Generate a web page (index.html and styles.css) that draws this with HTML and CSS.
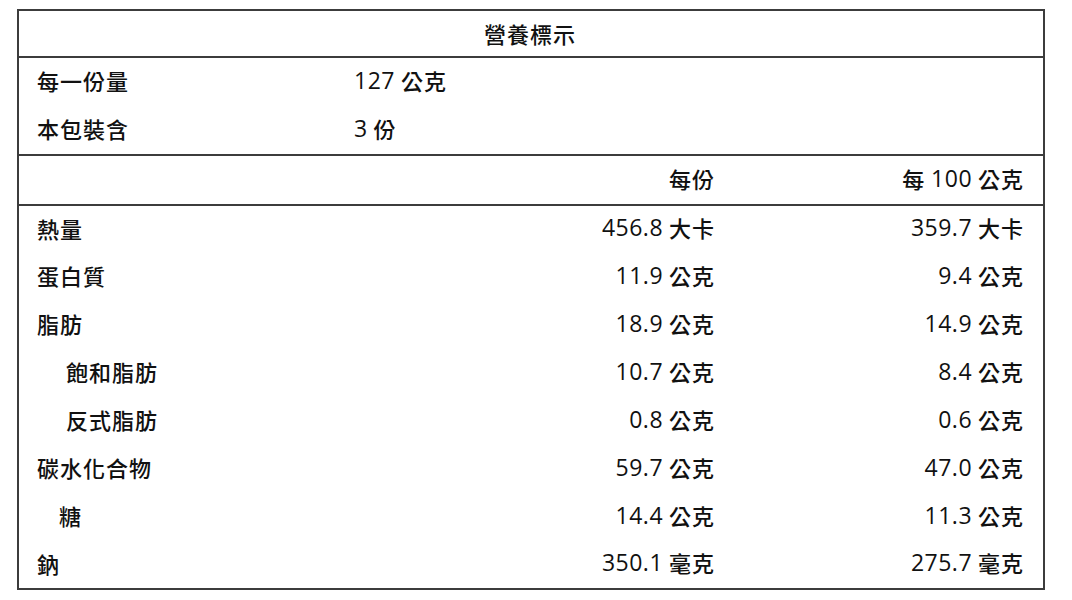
FILE: index.html
```html
<!DOCTYPE html>
<html lang="zh-Hant">
<head>
<meta charset="utf-8">
<title>營養標示</title>
<link rel="stylesheet" href="styles.css">
</head>
<body>
<div class="page">
<table class="nutrition">
  <colgroup>
    <col class="c-label">
    <col class="c-serv">
    <col class="c-100">
  </colgroup>
  <thead>
    <tr class="title-row"><th colspan="3">營養標示</th></tr>
  </thead>
  <tbody class="info">
    <tr class="first"><td>每一份量</td><td colspan="2"><span class="n">127</span> 公克</td></tr>
    <tr class="last"><td>本包裝含</td><td colspan="2"><span class="n">3</span> 份</td></tr>
  </tbody>
  <tbody class="head">
    <tr><td></td><td class="num">每份</td><td class="num">每 <span class="n">100</span> 公克</td></tr>
  </tbody>
  <tbody class="data">
    <tr><td>熱量</td><td class="num"><span class="n">456.8</span> 大卡</td><td class="num"><span class="n">359.7</span> 大卡</td></tr>
    <tr><td>蛋白質</td><td class="num"><span class="n">11.9</span> 公克</td><td class="num"><span class="n">9.4</span> 公克</td></tr>
    <tr><td>脂肪</td><td class="num"><span class="n">18.9</span> 公克</td><td class="num"><span class="n">14.9</span> 公克</td></tr>
    <tr><td class="sub">飽和脂肪</td><td class="num"><span class="n">10.7</span> 公克</td><td class="num"><span class="n">8.4</span> 公克</td></tr>
    <tr><td class="sub">反式脂肪</td><td class="num"><span class="n">0.8</span> 公克</td><td class="num"><span class="n">0.6</span> 公克</td></tr>
    <tr><td>碳水化合物</td><td class="num"><span class="n">59.7</span> 公克</td><td class="num"><span class="n">47.0</span> 公克</td></tr>
    <tr><td class="sub2">糖</td><td class="num"><span class="n">14.4</span> 公克</td><td class="num"><span class="n">11.3</span> 公克</td></tr>
    <tr><td>鈉</td><td class="num"><span class="n">350.1</span> 毫克</td><td class="num"><span class="n">275.7</span> 毫克</td></tr>
  </tbody>
</table>
</div>
</body>
</html>
```

FILE: styles.css
```css
html, body {
  margin: 0;
  padding: 0;
  background: #ffffff;
}

.page {
  padding: 9px 0 0 17px;
}

.nutrition {
  width: 1026px;
  border-collapse: collapse;
  table-layout: fixed;
  border: 2px solid #3c3c3c;
  font-family: "Noto Sans CJK TC", sans-serif;
  font-size: 22px;
  color: #111111;
}

.c-label { width: 318px; }
.c-serv { width: 398px; }
.c-100 { width: 310px; }

.nutrition th,
.nutrition td {
  height: 48px;
  padding: 0 20px 4px 18px;
  text-align: left;
  vertical-align: middle;
  white-space: nowrap;
  font-weight: 500;
  line-height: 1;
  letter-spacing: 1px;
  box-sizing: border-box;
}

.nutrition .n {
  font-family: "Open Sans", sans-serif;
  font-size: 23px;
  font-weight: 500;
  letter-spacing: 0.5px;
  vertical-align: 1px;
}

.title-row th {
  text-align: center;
  height: 47px;
  padding-bottom: 2px;
  border-bottom: 2px solid #3c3c3c;
}

.info td {
  height: 49px;
}

.info tr.last td {
  border-bottom: 2px solid #3c3c3c;
}

.head td {
  height: 50px;
  border-bottom: 2px solid #3c3c3c;
}

.nutrition td.num {
  text-align: right;
  padding-right: 19px;
}

.nutrition td.sub {
  padding-left: 47px;
}

.nutrition td.sub2 {
  padding-left: 40px;
}
```
